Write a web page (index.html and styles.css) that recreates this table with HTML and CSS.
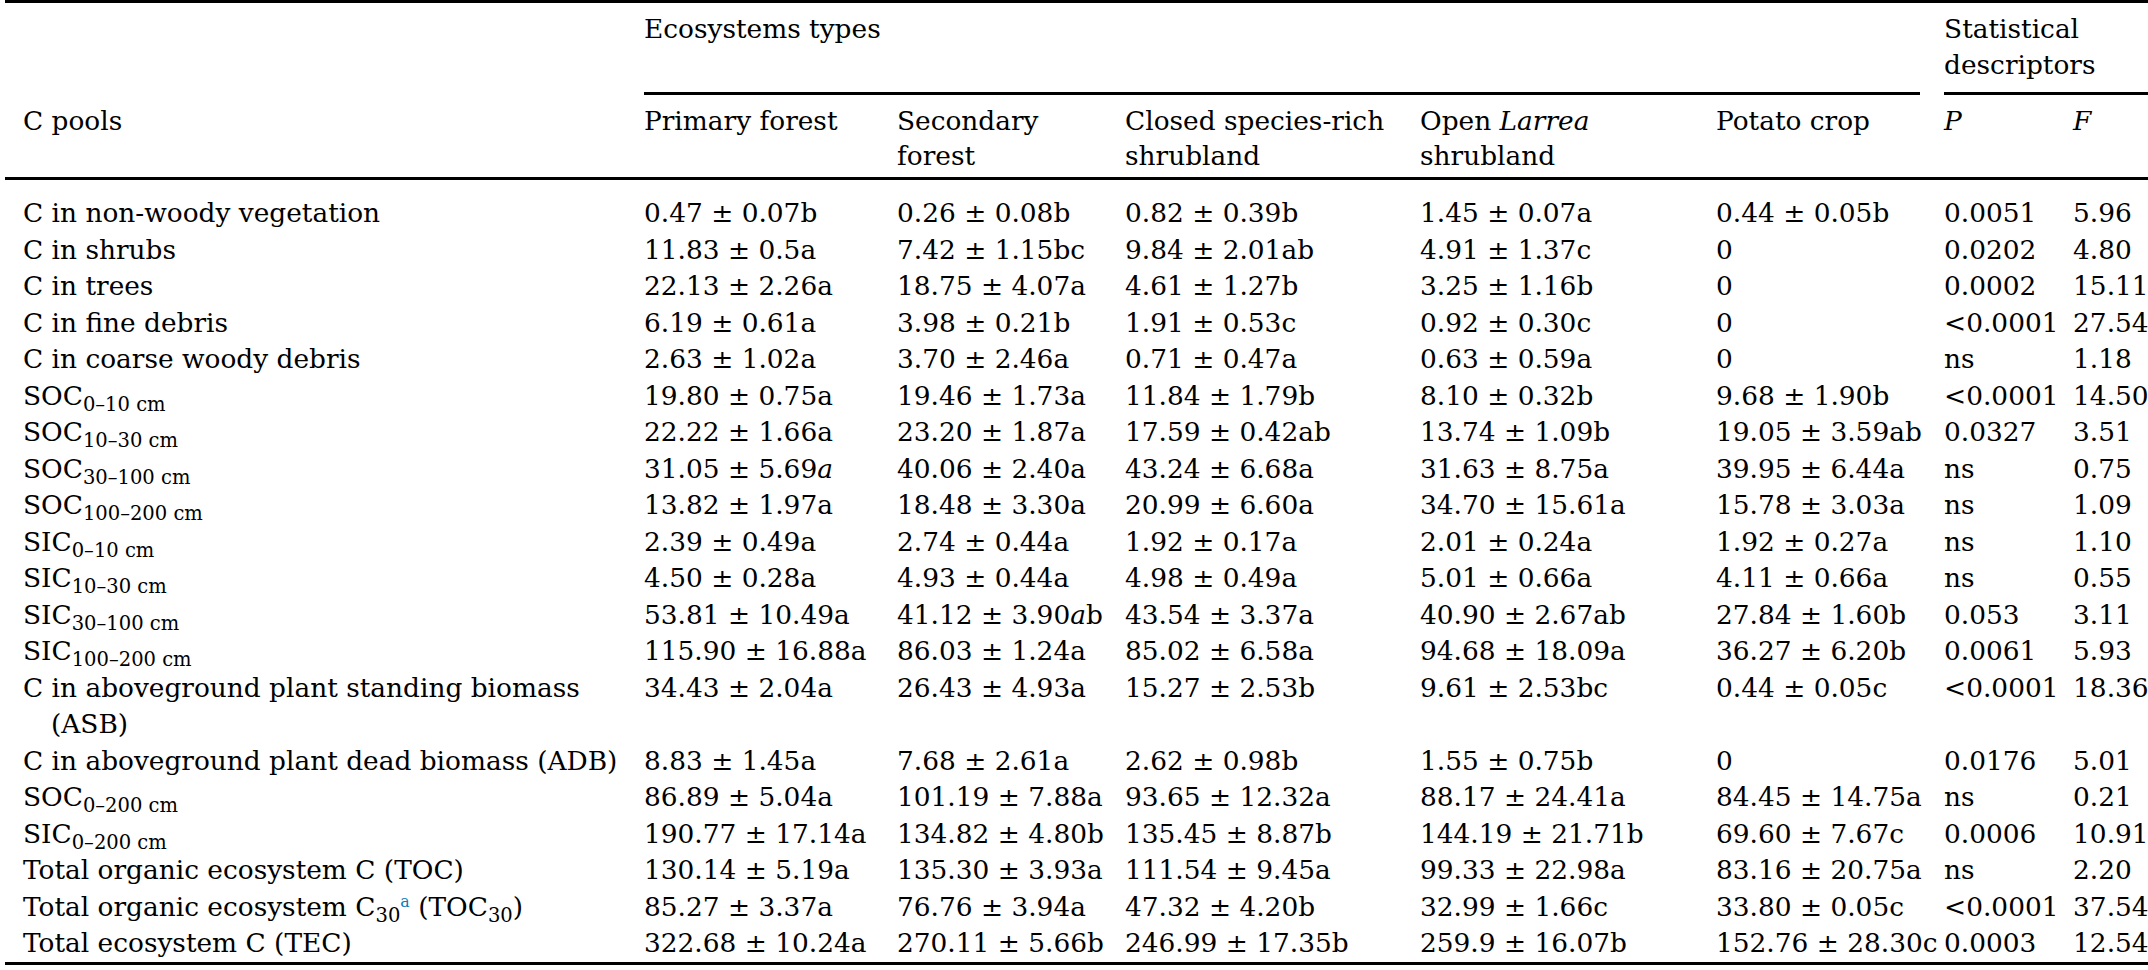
FILE: index.html
```html
<!DOCTYPE html>
<html lang="en">
<head>
<meta charset="utf-8">
<title>C pools by ecosystem type</title>
<link rel="stylesheet" href="styles.css">
</head>
<body>
<table class="ctable">
  <colgroup>
    <col class="c-label"><col class="c-prim"><col class="c-sec"><col class="c-closed"><col class="c-open"><col class="c-pot"><col class="c-p"><col class="c-f">
  </colgroup>
  <thead>
    <tr class="group-row">
      <th class="label"></th>
      <th colspan="5" class="grp grp-eco">Ecosystems types</th>
      <th colspan="2" class="grp grp-stat">Statistical<br>descriptors</th>
    </tr>
    <tr class="head-row">
      <th class="label">C pools</th>
      <th>Primary forest</th>
      <th>Secondary<br>forest</th>
      <th>Closed species-rich<br>shrubland</th>
      <th>Open <i>Larrea</i><br>shrubland</th>
      <th>Potato crop</th>
      <th><i>P</i></th>
      <th><i>F</i></th>
    </tr>
  </thead>
  <tbody>
    <tr class="first">
      <td class="label">C in non-woody vegetation</td>
      <td>0.47 ± 0.07b</td><td>0.26 ± 0.08b</td><td>0.82 ± 0.39b</td><td>1.45 ± 0.07a</td><td>0.44 ± 0.05b</td><td>0.0051</td><td>5.96</td>
    </tr>
    <tr>
      <td class="label">C in shrubs</td>
      <td>11.83 ± 0.5a</td><td>7.42 ± 1.15bc</td><td>9.84 ± 2.01ab</td><td>4.91 ± 1.37c</td><td>0</td><td>0.0202</td><td>4.80</td>
    </tr>
    <tr>
      <td class="label">C in trees</td>
      <td>22.13 ± 2.26a</td><td>18.75 ± 4.07a</td><td>4.61 ± 1.27b</td><td>3.25 ± 1.16b</td><td>0</td><td>0.0002</td><td>15.11</td>
    </tr>
    <tr>
      <td class="label">C in fine debris</td>
      <td>6.19 ± 0.61a</td><td>3.98 ± 0.21b</td><td>1.91 ± 0.53c</td><td>0.92 ± 0.30c</td><td>0</td><td>&lt;0.0001</td><td>27.54</td>
    </tr>
    <tr>
      <td class="label">C in coarse woody debris</td>
      <td>2.63 ± 1.02a</td><td>3.70 ± 2.46a</td><td>0.71 ± 0.47a</td><td>0.63 ± 0.59a</td><td>0</td><td>ns</td><td>1.18</td>
    </tr>
    <tr>
      <td class="label">SOC<sub>0–10 cm</sub></td>
      <td>19.80 ± 0.75a</td><td>19.46 ± 1.73a</td><td>11.84 ± 1.79b</td><td>8.10 ± 0.32b</td><td>9.68 ± 1.90b</td><td>&lt;0.0001</td><td>14.50</td>
    </tr>
    <tr>
      <td class="label">SOC<sub>10–30 cm</sub></td>
      <td>22.22 ± 1.66a</td><td>23.20 ± 1.87a</td><td>17.59 ± 0.42ab</td><td>13.74 ± 1.09b</td><td>19.05 ± 3.59ab</td><td>0.0327</td><td>3.51</td>
    </tr>
    <tr>
      <td class="label">SOC<sub>30–100 cm</sub></td>
      <td>31.05 ± 5.69<i>a</i></td><td>40.06 ± 2.40a</td><td>43.24 ± 6.68a</td><td>31.63 ± 8.75a</td><td>39.95 ± 6.44a</td><td>ns</td><td>0.75</td>
    </tr>
    <tr>
      <td class="label">SOC<sub>100–200 cm</sub></td>
      <td>13.82 ± 1.97a</td><td>18.48 ± 3.30a</td><td>20.99 ± 6.60a</td><td>34.70 ± 15.61a</td><td>15.78 ± 3.03a</td><td>ns</td><td>1.09</td>
    </tr>
    <tr>
      <td class="label">SIC<sub>0–10 cm</sub></td>
      <td>2.39 ± 0.49a</td><td>2.74 ± 0.44a</td><td>1.92 ± 0.17a</td><td>2.01 ± 0.24a</td><td>1.92 ± 0.27a</td><td>ns</td><td>1.10</td>
    </tr>
    <tr>
      <td class="label">SIC<sub>10–30 cm</sub></td>
      <td>4.50 ± 0.28a</td><td>4.93 ± 0.44a</td><td>4.98 ± 0.49a</td><td>5.01 ± 0.66a</td><td>4.11 ± 0.66a</td><td>ns</td><td>0.55</td>
    </tr>
    <tr>
      <td class="label">SIC<sub>30–100 cm</sub></td>
      <td>53.81 ± 10.49a</td><td>41.12 ± 3.90<i>a</i>b</td><td>43.54 ± 3.37a</td><td>40.90 ± 2.67ab</td><td>27.84 ± 1.60b</td><td>0.053</td><td>3.11</td>
    </tr>
    <tr>
      <td class="label">SIC<sub>100–200 cm</sub></td>
      <td>115.90 ± 16.88a</td><td>86.03 ± 1.24a</td><td>85.02 ± 6.58a</td><td>94.68 ± 18.09a</td><td>36.27 ± 6.20b</td><td>0.0061</td><td>5.93</td>
    </tr>
    <tr>
      <td class="label wrap">C in aboveground plant standing biomass<br>(ASB)</td>
      <td>34.43 ± 2.04a</td><td>26.43 ± 4.93a</td><td>15.27 ± 2.53b</td><td>9.61 ± 2.53bc</td><td>0.44 ± 0.05c</td><td>&lt;0.0001</td><td>18.36</td>
    </tr>
    <tr>
      <td class="label">C in aboveground plant dead biomass (ADB)</td>
      <td>8.83 ± 1.45a</td><td>7.68 ± 2.61a</td><td>2.62 ± 0.98b</td><td>1.55 ± 0.75b</td><td>0</td><td>0.0176</td><td>5.01</td>
    </tr>
    <tr>
      <td class="label">SOC<sub>0–200 cm</sub></td>
      <td>86.89 ± 5.04a</td><td>101.19 ± 7.88a</td><td>93.65 ± 12.32a</td><td>88.17 ± 24.41a</td><td>84.45 ± 14.75a</td><td>ns</td><td>0.21</td>
    </tr>
    <tr>
      <td class="label">SIC<sub>0–200 cm</sub></td>
      <td>190.77 ± 17.14a</td><td>134.82 ± 4.80b</td><td>135.45 ± 8.87b</td><td>144.19 ± 21.71b</td><td>69.60 ± 7.67c</td><td>0.0006</td><td>10.91</td>
    </tr>
    <tr>
      <td class="label">Total organic ecosystem C (TOC)</td>
      <td>130.14 ± 5.19a</td><td>135.30 ± 3.93a</td><td>111.54 ± 9.45a</td><td>99.33 ± 22.98a</td><td>83.16 ± 20.75a</td><td>ns</td><td>2.20</td>
    </tr>
    <tr>
      <td class="label">Total organic ecosystem C<sub class="num">30</sub><sup class="fn">a</sup> (TOC<sub class="num">30</sub>)</td>
      <td>85.27 ± 3.37a</td><td>76.76 ± 3.94a</td><td>47.32 ± 4.20b</td><td>32.99 ± 1.66c</td><td>33.80 ± 0.05c</td><td>&lt;0.0001</td><td>37.54</td>
    </tr>
    <tr class="last">
      <td class="label">Total ecosystem C (TEC)</td>
      <td>322.68 ± 10.24a</td><td>270.11 ± 5.66b</td><td>246.99 ± 17.35b</td><td>259.9 ± 16.07b</td><td>152.76 ± 28.30c</td><td>0.0003</td><td>12.54</td>
    </tr>
  </tbody>
</table>
</body>
</html>
```

FILE: styles.css
```css
html, body {
  margin: 0;
  padding: 0;
  background: #ffffff;
}

body {
  font-family: "DejaVu Serif", "Liberation Serif", serif;
  color: #000000;
}

.ctable {
  margin-left: 5px;
  width: 2143px;
  table-layout: fixed;
  border-collapse: separate;
  border-spacing: 0;
  border-top: 3px solid #000;
  border-bottom: 3px solid #000;
  font-size: 26.4px;
  line-height: 36.5px;
}

.c-label { width: 639px; }
.c-prim { width: 253px; }
.c-sec { width: 228px; }
.c-closed { width: 295px; }
.c-open { width: 296px; }
.c-pot { width: 228px; }
.c-p { width: 129px; }
.c-f { width: 75px; }

th, td {
  padding: 0;
  text-align: left;
  vertical-align: top;
  font-weight: normal;
  white-space: nowrap;
}

th.label, td.label {
  padding-left: 18px;
}

.group-row th {
  padding-top: 8px;
  padding-bottom: 12px;
  line-height: 36px;
}

.grp-eco {
  background: linear-gradient(#000, #000) left bottom / calc(100% - 24px) 3px no-repeat;
}

.grp-stat {
  background: linear-gradient(#000, #000) left bottom / 100% 3px no-repeat;
}

.head-row th {
  padding-top: 8px;
  padding-bottom: 4px;
  line-height: 35px;
  border-bottom: 3px solid #000;
}

tbody tr.first td {
  padding-top: 15px;
}

td.wrap {
  padding-left: 46px;
  text-indent: -28px;
}

sub {
  font-size: 0.74em;
  line-height: 0;
  vertical-align: -0.32em;
}

sup.fn {
  font-size: 0.6em;
  line-height: 0;
  vertical-align: 0.6em;
  color: #0c7dbb;
}
```
